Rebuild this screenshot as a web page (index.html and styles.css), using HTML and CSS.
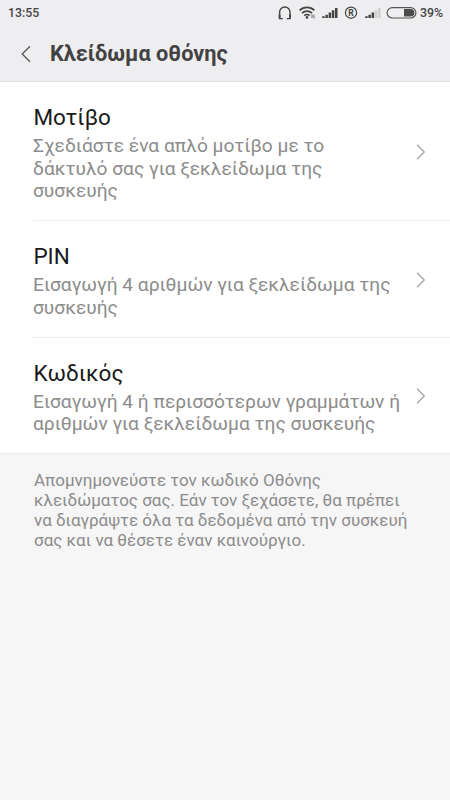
FILE: index.html
```
<!doctype html>
<html lang="el">
<head>
<meta charset="utf-8">
<meta name="viewport" content="width=device-width, initial-scale=1">
<title>Κλείδωμα οθόνης</title>
<link rel="stylesheet" href="styles.css">
</head>

<body>
<div class="header">
	<div class="status">
		<span class="time">13:55</span>
		<svg class="icons" width="142" height="26" viewBox="0 0 142 26">
			<!-- headset -->
			<g fill="none" stroke="#444" stroke-width="1.4">
				<path d="M3.6 17.5V12.2a5.2 5.2 0 0 1 10.4 0v5.3"/>
				<path d="M3.6 14.5v3.8M14 14.5v3.8" stroke-width="1.8"/>
				<path d="M2.8 18.6h4M14.8 18.6h-4"/>
			</g>
			<!-- wifi -->
			<g fill="none" stroke="#444" stroke-width="1.7">
				<path d="M23.6 10.4a10.5 10.5 0 0 1 14.8 0"/>
				<path d="M26 13.1a7.1 7.1 0 0 1 10 0"/>
				<path d="M28.3 15.6a3.9 3.9 0 0 1 5.4 0"/>
			</g>
			<circle cx="31" cy="17.4" r="1.3" fill="#444"/>
			<path d="M36 14.4v3.5M38 14.8v3.5" stroke="#666"/>
			<!-- signal 1 -->
			<path d="M46.2 16.3h2.5V18h-2.5zM49.4 14.8h2.5V18h-2.5zM52.6 12.6h2.5V18h-2.5zM55.8 10.3h2.5V18h-2.5zM59 8h2.5v10H59z" fill="#444"/>
			<!-- registered -->
			<circle cx="75" cy="12.7" r="5.6" fill="none" stroke="#444" stroke-width="1.2"/>
			<text x="75.1" y="15.8" class="reg">R</text>
			<!-- signal 2 -->
			<path d="M89.2 16.3h2.5V18h-2.5zM92.4 14.8h2.5V18h-2.5zM95.6 12.6h2.5V18h-2.5z" fill="#444"/>
			<path d="M98.8 10.3h2.5V18h-2.5zM102 8h2.5v10H102z" fill="#cfcfd0"/>
			<!-- battery -->
			<rect x="111.1" y="7.6" width="28.8" height="10.4" rx="5.2" fill="none" stroke="#555" stroke-width="1.2"/>
			<path d="M128 9h6.6a3.8 3.8 0 0 1 0 7.6H128z" fill="#4a4a4a"/>
		</svg>
		<span class="percent">39%</span>
	</div>
	<div class="bar">
		<svg class="back" width="10" height="18" viewBox="0 0 10 18"><path d="M9 1.2L1.2 9 9 16.8"/></svg>
		<h1>Κλείδωμα οθόνης</h1>
	</div>
</div>

<ul class="list">
	<li>
		<div class="text">
			<h2>Μοτίβο</h2>
			<p>Σχεδιάστε ένα απλό μοτίβο με το<br>δάκτυλό σας για ξεκλείδωμα της<br>συσκευής</p>
		</div>
		<svg class="arrow" width="10" height="16" viewBox="0 0 10 16"><path d="M1 .8L8.3 8 1 15.2"/></svg>
	</li>
	<li>
		<div class="text">
			<h2>PIN</h2>
			<p>Εισαγωγή 4 αριθμών για ξεκλείδωμα της<br>συσκευής</p>
		</div>
		<svg class="arrow" width="10" height="16" viewBox="0 0 10 16"><path d="M1 .8L8.3 8 1 15.2"/></svg>
	</li>
	<li>
		<div class="text">
			<h2>Κωδικός</h2>
			<p>Εισαγωγή 4 ή περισσότερων γραμμάτων ή<br>αριθμών για ξεκλείδωμα της συσκευής</p>
		</div>
		<svg class="arrow" width="10" height="16" viewBox="0 0 10 16"><path d="M1 .8L8.3 8 1 15.2"/></svg>
	</li>
</ul>

<p class="note">Απομνημονεύστε τον κωδικό Οθόνης<br>κλειδώματος σας. Εάν τον ξεχάσετε, θα πρέπει<br>να διαγράψτε όλα τα δεδομένα από την συσκευή<br>σας και να θέσετε έναν καινούργιο.</p>
</body>
</html>
```
FILE: styles.css
```
*{ margin:0; padding:0; list-style:none; box-sizing:border-box;}
body{ background:#f6f6f6; font-family:Roboto, "Noto Sans", sans-serif; min-height:800px;}

.header{ height:82px; background:#eeeef0; border-bottom:1px solid #e0e0e1;}
.status{ height:26px; display:flex; align-items:center; padding:0 8px; color:#444; font-size:12.3px; font-weight:500; white-space:nowrap;}
.time{ flex:1;}
.icons{ display:block; margin-right:2px;}
.reg{ font-size:8.5px; font-weight:700; fill:#444; text-anchor:middle;}
.percent{ width:22px;}
.bar{ height:55px; display:flex; align-items:center; padding-left:20.5px;}
.back{ fill:none; stroke:#555; stroke-width:1.3;}
.bar h1{ margin-left:19.5px; font-size:21.7px; line-height:26px; font-weight:700; color:#424242;}

.list{ background:#fff;}
.list li{ display:flex; align-items:center; justify-content:space-between; margin-left:33px; padding:21px 24px 17.4px 0; border-bottom:1px solid #ececec;}
.list li:last-child{ margin-left:0; padding-left:33px;}
.text{ white-space:nowrap;}
.text h2{ margin-bottom:3px; font-size:22.5px; line-height:29px; font-weight:400; color:#1a1a1a; text-indent:.4px;}
.text p{ font-size:19.2px; line-height:22.6px; color:#8c8c8c;}
.arrow{ flex:none; margin-bottom:2px; fill:none; stroke:#a0a0a0; stroke-width:1.2;}

.note{ padding:16px 0 0 34px; font-size:17px; line-height:20px; color:#8c8c8c; white-space:nowrap;}
```
